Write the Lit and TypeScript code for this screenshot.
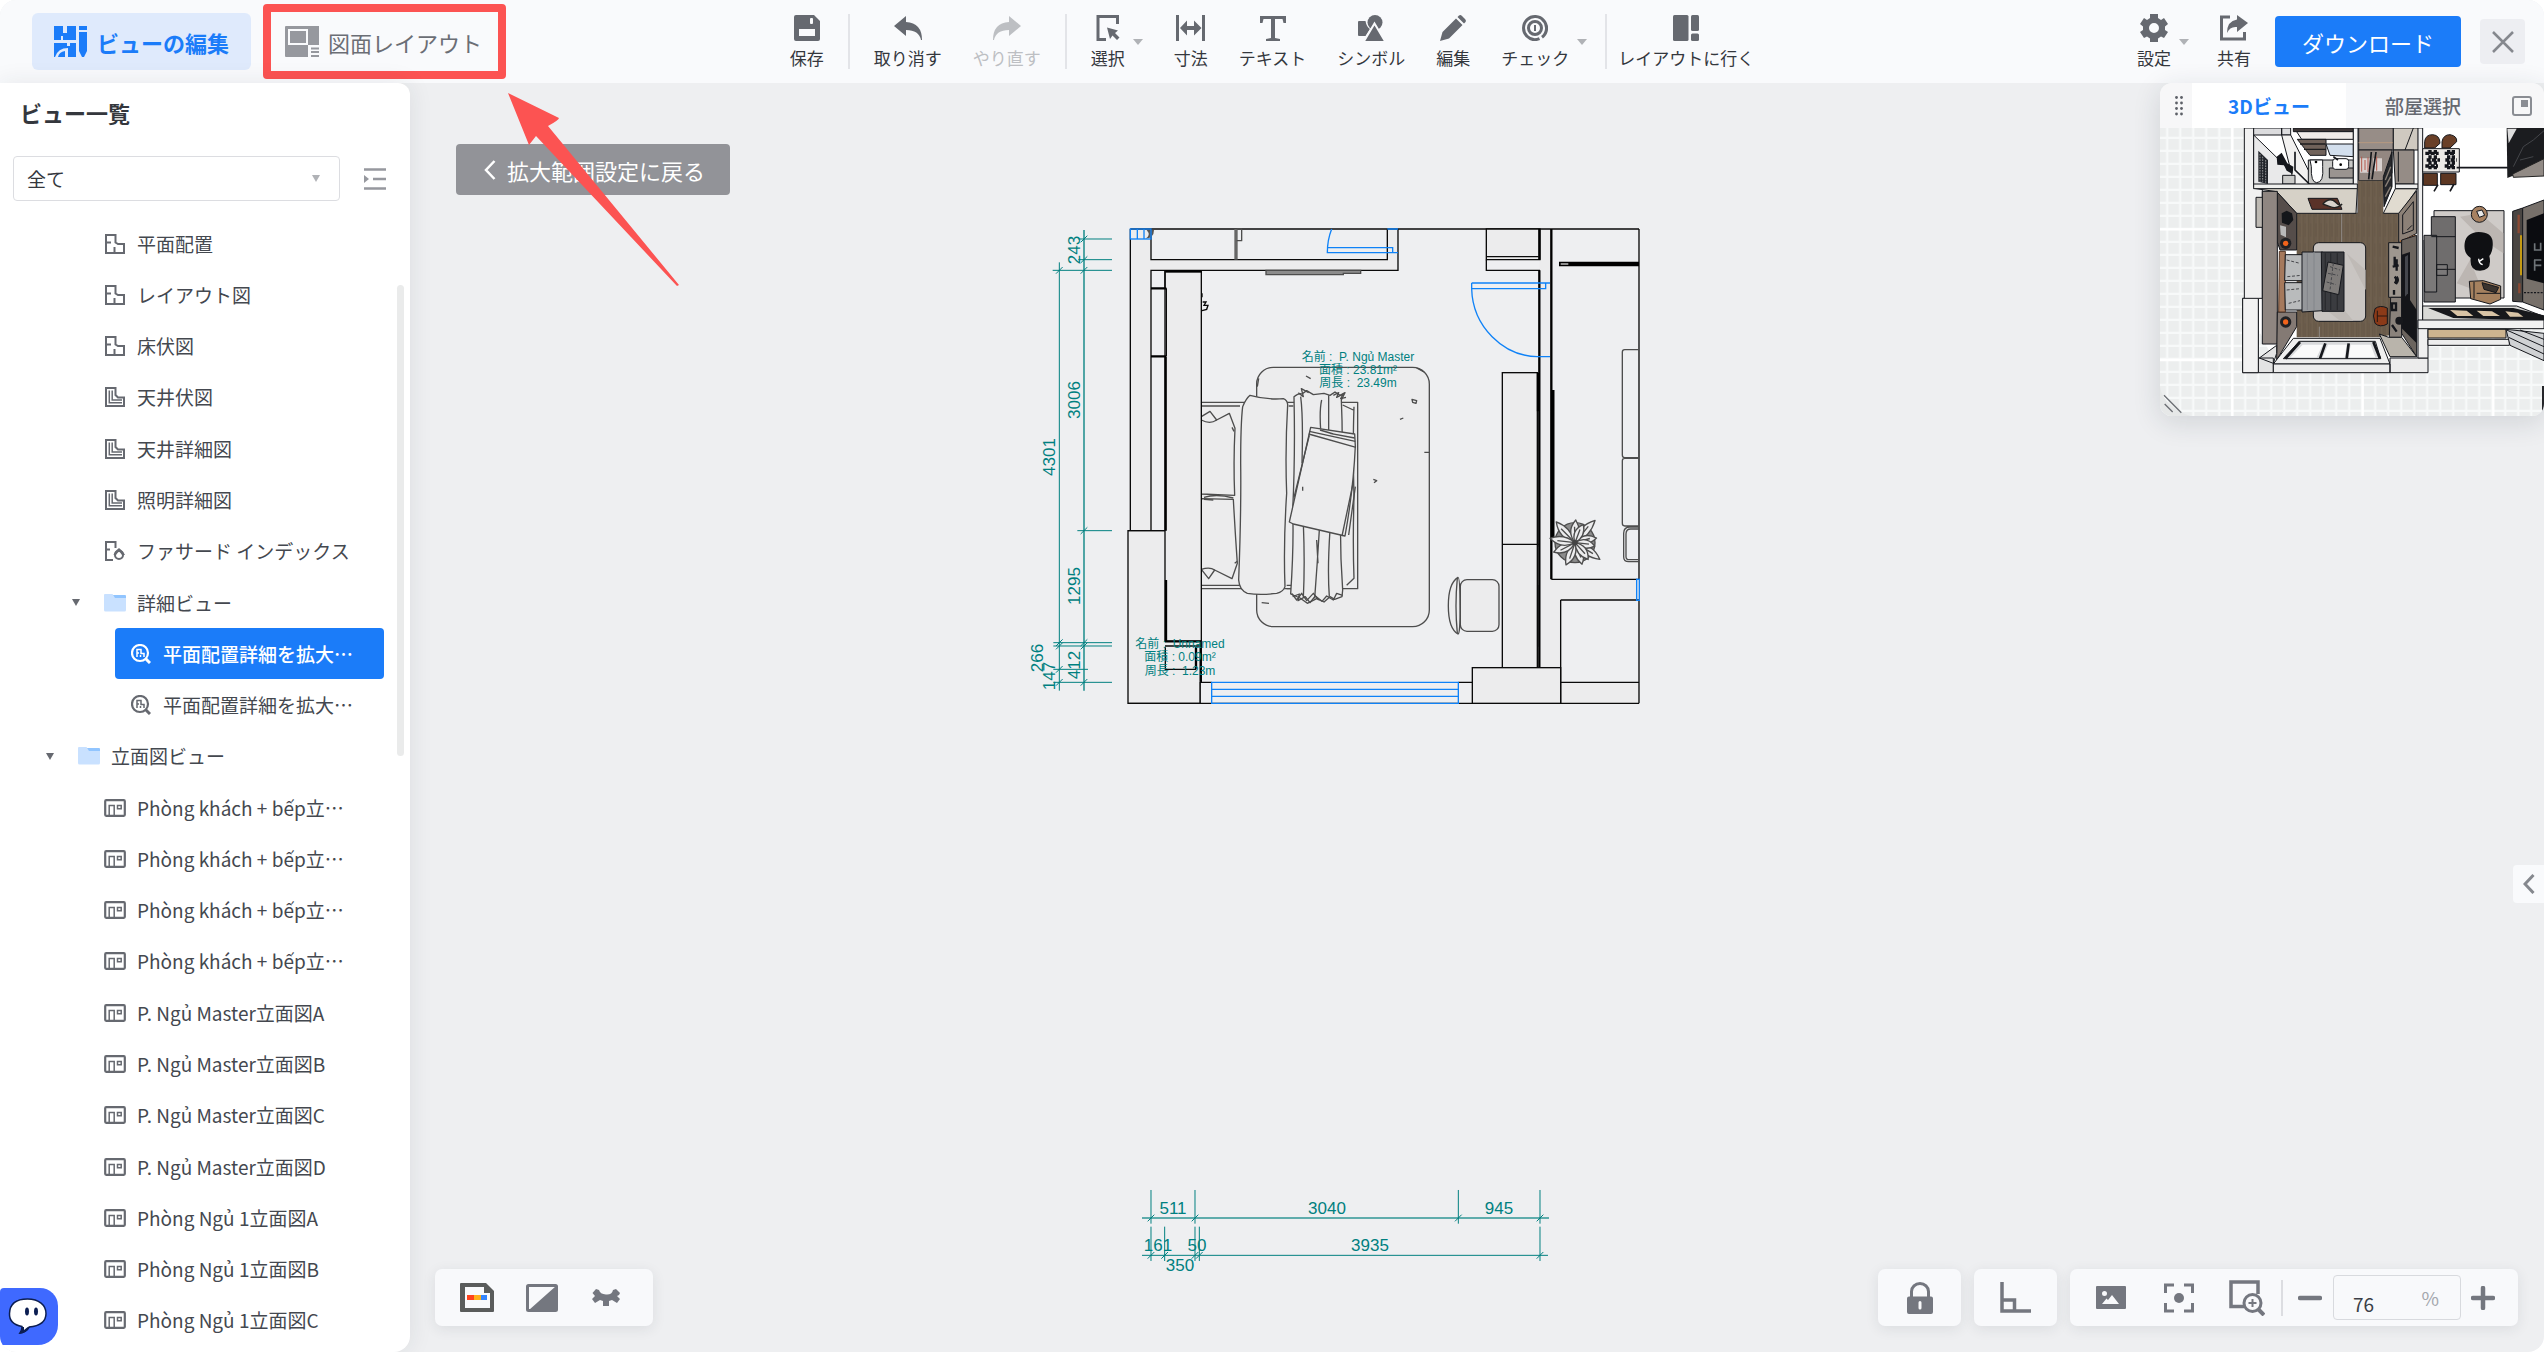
import { LitElement, html, svg, css, TemplateResult } from "lit";
import { customElement, state } from "lit/decorators.js";
import { classMap } from "lit/directives/class-map.js";

type Icon = TemplateResult;

const icons: Record<string, Icon> = {
  save: html`<svg width="26" height="26" viewBox="0 0 26 26"><path fill="currentColor" fill-rule="evenodd" d="M2 0H20L26 6V24Q26 26 24 26H2Q0 26 0 24V2Q0 0 2 0ZM17 3Q16 3 16 4V8Q16 9 17 9H18Q19 9 19 8V4Q19 3 18 3ZM5 14V21H21V14Z"/></svg>`,
  undo: html`<svg width="28" height="26" viewBox="0 0 28 26"><path fill="currentColor" d="M12 1V7Q28 8 28 25H27Q25 15 12 15V21L0 11Z"/></svg>`,
  redo: html`<svg width="28" height="26" viewBox="0 0 28 26"><path fill="currentColor" d="M16 1V7Q0 8 0 25H1Q3 15 16 15V21L28 11Z"/></svg>`,
  select: html`<svg width="24" height="26" viewBox="0 0 24 26"><path fill="none" stroke="currentColor" stroke-width="3" d="M10 24.500H2V1.500H21.500V9"/><path fill="currentColor" d="M11 12.500L22 15.500L19 18L23.500 22.500L21 25L16.500 20.500L14 24Z"/></svg>`,
  measure: html`<svg width="30" height="26" viewBox="0 0 30 26"><path fill="currentColor" d="M0 0H3V26H0ZM26 0H29V26H26ZM4 13L11 5.500V11H18V5.500L25.500 13L18 20.500V15H11V20.500Z"/></svg>`,
  text: html`<svg width="26" height="26" viewBox="0 0 26 26"><path fill="currentColor" d="M0 1H26V8H23.500L22.500 4H15V23L20 24V26H6V24L11 23V4H3.500L2.500 8H0Z"/></svg>`,
  symbol: html`<svg width="26" height="26" viewBox="0 0 26 26"><circle cx="17" cy="7.500" r="7.500" fill="currentColor"/><path fill="currentColor" d="M1 6H7.500Q8.500 12 12 14L7.500 21H1Q0 21 0 20V7Q0 6 1 6Z"/><path fill="currentColor" stroke="#f9fafc" stroke-width="2" d="M16.500 8.500L27.500 27H5.500Z"/></svg>`,
  pencil: html`<svg width="26" height="26" viewBox="0 0 26 26"><path fill="currentColor" d="M16 3.500L22.500 10L9 23.500L0 26L2.500 17ZM17.500 2L19 .5Q20.500 -.5 22 1L25 4Q26.500 5.500 25.500 7L24 8.500Z"/></svg>`,
  check: html`<svg width="26" height="26" viewBox="0 0 26 26" fill="none" stroke="currentColor"><path stroke-width="3" d="M20 22.200A11.500 11.500 0 1 0 5 21.300A11.500 11.500 0 0 0 17.500 23.600M20 4A11.500 11.500 0 0 1 23.300 18.500"/><circle cx="13" cy="13" r="6.500" stroke-width="3"/><path stroke-width="2" d="M13 10V16"/></svg>`,
  goLayout: html`<svg width="26" height="26" viewBox="0 0 26 26" fill="currentColor"><rect width="15.500" height="26" rx="1.500"/><rect x="18" width="8" height="16" rx="1.500"/><rect x="18" y="18.500" width="8" height="7.500" rx="1.500"/></svg>`,
  gear: html`<svg width="28" height="28" viewBox="0 0 28 28"><path fill="currentColor" fill-rule="evenodd" d="M10 0H18V4L21 6L24 4L28 10L25 12.500V16L28 18L24 24L21 22.500L18 24.500V28H10V24.500L7 22.500L4 24L0 18L3 16V12.500L0 10L4 4L7 6L10 4ZM14 9A5 5 0 1 0 14 19A5 5 0 1 0 14 9Z"/></svg>`,
  share: html`<svg width="28" height="26" viewBox="0 0 28 26"><path fill="none" stroke="currentColor" stroke-width="3" d="M10 2H1.500V24H24.500V17"/><path fill="currentColor" d="M17 0L28 8L17 17V12Q10 11 7 18Q7 6 17 4.500Z"/></svg>`,
  plan: html`<svg width="20" height="20" viewBox="0 0 20 20" fill="none" stroke="currentColor" stroke-width="2"><path d="M1 1H10.500V8.500L13 10H19V19H1ZM1 8.500H6M9.500 19V13"/></svg>`,
  ceiling: html`<svg width="20" height="20" viewBox="0 0 20 20" fill="none" stroke="currentColor" stroke-width="2"><path d="M1 1H10.500V8L13 10.500H19V19H1Z"/><path stroke-width="1.500" d="M4.300 3.500V15.800H17M7.200 3.500V13H17"/></svg>`,
  facade: html`<svg width="20" height="20" viewBox="0 0 20 20" fill="none" stroke="currentColor" stroke-width="2"><path d="M8 19H1V1H10.500V7M1 8.500H5"/><circle cx="14" cy="14" r="4"/><path fill="currentColor" stroke="none" d="M10 10.500L14 7L18 10.500L20 14H17L14 10L11 14H8.500Z"/></svg>`,
  detail: html`<svg width="20" height="20" viewBox="0 0 20 20" fill="none" stroke="currentColor"><circle cx="9" cy="9" r="8" stroke-width="2.200"/><path stroke-width="3" d="M14.500 14.500L19 19"/><path stroke-width="1.500" d="M6 13V5.500H10V9.500H13V13M6 9H8M9.500 13V11"/></svg>`,
  elevation: html`<svg width="22" height="18" viewBox="0 0 22 18" fill="none" stroke="currentColor"><rect x="1.200" y="1.200" width="19.600" height="15.600" rx="1" stroke-width="2.200"/><path stroke-width="1.500" d="M5.200 17V6.500H10.200V17M13.500 6.500H17.200V9.800H13.500Z"/></svg>`,
  folder: html`<svg width="22" height="18" viewBox="0 0 22 18"><path fill="#91c5ff" d="M9 1H21Q22 1 22 2V8H9Z"/><path fill="#c9e1ff" d="M1 0H8.500L11 4H22V16Q22 17.500 20.500 17.500H1.500Q0 17.500 0 16V1Q0 0 1 0Z"/></svg>`,
};

interface TreeRow {
  label: string;
  icon: string;
  level: number;
  open?: boolean;
}

const elevations = [
  "Phòng khách + bếp立…", "Phòng khách + bếp立…", "Phòng khách + bếp立…", "Phòng khách + bếp立…",
  "P. Ngủ Master立面図A", "P. Ngủ Master立面図B", "P. Ngủ Master立面図C", "P. Ngủ Master立面図D",
  "Phòng Ngủ 1立面図A", "Phòng Ngủ 1立面図B", "Phòng Ngủ 1立面図C",
];

const rows: TreeRow[] = [
  { label: "平面配置", icon: "plan", level: 2 },
  { label: "レイアウト図", icon: "plan", level: 2 },
  { label: "床伏図", icon: "plan", level: 2 },
  { label: "天井伏図", icon: "ceiling", level: 2 },
  { label: "天井詳細図", icon: "ceiling", level: 2 },
  { label: "照明詳細図", icon: "ceiling", level: 2 },
  { label: "ファサード インデックス", icon: "facade", level: 2 },
  { label: "詳細ビュー", icon: "folder", level: 2, open: true },
  { label: "平面配置詳細を拡大…", icon: "detail", level: 3 },
  { label: "平面配置詳細を拡大…", icon: "detail", level: 3 },
  { label: "立面図ビュー", icon: "folder", level: 1, open: true },
  ...elevations.map((label) => ({ label, icon: "elevation", level: 2 })),
];

const shared = css`
  * { box-sizing: border-box; }
  button, input, select { font: inherit; color: inherit; border: 0; background: none; padding: 0; margin: 0; cursor: pointer; }
  svg { display: block; flex: none; }
`;

const caret = html`<svg class="caret" width="10" height="6" viewBox="0 0 10 6"><path fill="#b0b2b6" d="M0 0H10L5 6Z"/></svg>`;

@customElement("floor-plan")
export class FloorPlan extends LitElement {
  static styles = css`
    :host { display: block; }
    .sheet { display: block; width: 100%; height: 100%; }
    .dim { font: 17px "Liberation Sans", sans-serif; fill: #008080; text-anchor: middle; }
    .note { font: 12px "Liberation Sans", "Noto Sans CJK JP", sans-serif; fill: #008080; text-anchor: middle; white-space: pre; }
    .teal { stroke: #008080; fill: none; }
    .wall { stroke: #0a0a0a; stroke-width: 4; fill: #ececed; }
    .line { stroke: #0a0a0a; stroke-width: 4; fill: none; }
    .thick { stroke: #000; stroke-width: 7; fill: none; }
    .blue { stroke: #0f82f7; stroke-width: 4; fill: none; }
    .item { stroke: #4d4d4d; stroke-width: 4; fill: #ececed; stroke-linejoin: round; }
    .sketch { stroke: #4d4d4d; stroke-width: 4; fill: none; stroke-linejoin: round; }
    .shade { stroke: #4d4d4d; stroke-width: 4; fill: #8c8c8c; }
  `;

  private vdim(x: number, y: number, label: string) {
    return svg`<text class="dim" transform="translate(${x} ${y}) rotate(-90)">${label}</text>`;
  }

  private tick(x: number, y: number) {
    return svg`<path d="M${x - 10} ${y + 10}L${x + 10} ${y - 10}"/>`;
  }

  private leaf(angle: number, length: number) {
    return svg`<g transform="translate(1665 998) rotate(${angle})"><path class="item" d="M0 0Q${length / 2} -28 ${length} 0Q${length / 2} 22 0 0L${length * 0.7} -3"/></g>`;
  }

  render() {
    const marks: [number, number][] = [
      [192, 87], [192, 149], [192, 181], [192, 962], [192, 1298], [192, 1308], [192, 1417],
      [118, 181], [118, 1298], [118, 1308], [118, 1378], [118, 1417],
    ];
    const upper = [93, 225, 1015, 1260];
    const lower = [93, 134, 225, 238, 1260];
    const leaves: [number, number][] = [
      [-132, 84], [-88, 68], [-48, 90], [-12, 66], [34, 90], [72, 68], [112, 72], [156, 70], [190, 76], [-65, 60], [10, 60], [52, 64],
    ];
    return html`
      <svg class="sheet" viewBox="410 83 2134 1269" preserveAspectRatio="xMidYMid meet" role="img" aria-label="平面図">
        <g transform="translate(1020 210) scale(.33333)">
          <path fill="#ececed" d="M331 57H393V149H1102V57H1134V181H393V962H331ZM1558 57H1594V1108H1857V1170H1622V1417H1857V1480H1357V1373H1558Z"/>
          <path class="line" d="M331 57H1857M331 57V962M393 57V149H1102V57M1134 57V181H393V962M1857 57V1108M1857 1170V1480M1594 1108H1857M1622 1170H1857M1622 1170V1480M1622 1417H1857M544 1417H575M540 1417V1480M1315 1417H1357"/>
          <rect class="item" x="710" y="472" width="518" height="778" rx="50"/>
          <path class="sketch" d="M858 498L872 506M1176 568L1190 572L1188 580L1178 577ZM1140 628L1150 624M1060 808L1070 812L1062 818M725 1178L747 1180M1213 727H1227M712 530L716 505M1190 474L1212 486"/>

          <rect class="item" x="544" y="577" width="469" height="559"/>
          <path class="sketch" d="M544 588H660M544 1126H660M1002 590Q998 700 1002 860Q998 1000 1002 1105L980 1126M968 585L1000 600"/>
          <path class="item" d="M544 620L570 604L590 630L628 610L645 655Q640 760 644 856L544 852Z"/>
          <path class="item" d="M544 866L640 868Q645 960 652 1060L636 1106L584 1080L566 1106L544 1078Z"/>
          <path class="sketch" d="M544 630Q570 644 590 630M544 1078Q570 1070 584 1080M552 862Q590 850 640 864M636 652L642 664M644 1060L652 1054M552 868L580 870"/>
          <path class="item" d="M690 556Q740 570 790 566Q802 570 803 584Q795 720 800 850Q790 1000 795 1130Q790 1146 770 1150Q720 1156 682 1150Q658 1140 656 1110Q664 900 662 760Q662 640 668 590Q678 566 690 556Z"/>
          <path class="sketch" d="M806 588H820M800 1126H816M800 1136H816"/>
          <path class="item" d="M822 560Q838 548 846 552L860 542L880 554L912 550L930 556L945 546L960 556L975 548L964 570Q970 700 963 860Q958 1000 968 1140L966 1160L944 1168L930 1160L912 1176L890 1166L862 1180L840 1164L812 1152Q822 1000 818 900Q826 740 822 560Z"/>
          <path class="sketch" d="M842 560Q850 620 846 760M905 570Q898 600 902 660M926 556V660M850 940Q855 1060 850 1165M898 960Q892 1060 884 1165M930 960Q922 1080 928 1160M890 990L894 1060M835 548L850 560L844 536L866 548M818 1160L838 1152L834 1172L856 1160L870 1178L886 1158L906 1174L920 1158L940 1170L950 1150L968 1156"/>
          <path class="sketch" d="M940 556L956 548L950 562L970 552L962 566L978 562M815 1150L830 1170L845 1150L860 1172L880 1150L896 1170"/>
          <path class="item" d="M872 652L1004 672L1006 708Q1000 840 975 978L820 942L808 936Z"/>
          <path class="sketch" d="M866 672L1008 712M868 664L1006 694M900 660L940 672M930 670L1004 684M1006 830L986 975M868 676L822 862M848 830V842M966 978L1000 816"/>

          <path class="shade" d="M738 181H1022V190H970V194H738Z"/>
          <path d="M648 57V149" stroke="#666" stroke-width="10"/>
          <path class="sketch" d="M650 57H665V92H650"/>
          <path fill="#555" d="M380 60H402Q402 84 376 86Q394 76 380 60Z"/>
          <path class="line" d="M546 250V262M548 276H558L552 286H564L560 298L546 302"/>

          <path class="wall" d="M324 962H437V1294H544V1417H540V1480H324Z"/>
          <rect class="wall" x="435" y="185" width="109" height="1109"/>
          <path class="thick" d="M435 184H544M437 440V962M393 235H439M393 439H439M435 1294H546M438 1110V1294"/>
          <path class="line" d="M435 181V235M439 235V439M435 1308H540M543 1294V1417M324 962H435M436 1312V1378H527V1312M393 1480H1857M324 1480H575"/>
          <path class="thick" d="M542 1300V1415M528 1312V1376"/>

          <path class="wall" d="M1399 57H1560V149H1399Z"/>
          <path class="line" d="M1399 140H1556M1399 149V181H1560"/>
          <rect class="wall" x="1447" y="488" width="105" height="885"/>
          <path class="line" d="M1447 1003H1556M1553 600V1010M1553 1125V1310"/>
          <path class="thick" d="M1558 57V149M1558 181V1373M1594 57V1108M1554 488V604M1600 540V990"/>
          <rect class="wall" x="1357" y="1373" width="265" height="107"/>
          <path d="M1617 162H1857" stroke="#000" stroke-width="13"/>
          <path d="M1622 162H1645" stroke="#aaa" stroke-width="5"/>

          <rect class="blue" x="331" y="57" width="62" height="30"/>
          <path class="blue" d="M352 57V87M372 57V87M935 57Q922 90 922 128H1134M922 113H1118V128M1102 57H1134"/>
          <path class="blue" d="M1355 219H1590M1355 219V236H1577V219M1355 236C1358 350 1450 438 1552 440H1590"/>
          <path class="blue" d="M575 1417H1315V1480H575ZM575 1438H1315M575 1459H1315"/>
          <rect class="blue" x="1850" y="1108" width="8" height="63"/>

          <path class="sketch" d="M1857 419H1814Q1807 419 1807 426V735Q1807 743 1814 743H1857M1857 745H1814Q1807 745 1807 752V940Q1807 948 1814 948H1857M1857 951H1830Q1811 951 1811 970V1040Q1811 1055 1826 1055H1857M1857 957H1832Q1818 957 1818 972V1040Q1818 1049 1828 1049H1857"/>
          <rect class="item" x="1321" y="1109" width="116" height="155" rx="20"/>
          <path class="item" d="M1314 1102Q1285 1120 1285 1187Q1285 1255 1314 1272Q1321 1272 1320 1187Q1320 1102 1314 1102Z"/>
          <path class="sketch" d="M1312 1104Q1304 1187 1312 1270"/>
          <circle class="shade" cx="1665" cy="998" r="60"/>
          ${leaves.map(([a, l]) => this.leaf(a, l))}
          <circle cx="1665" cy="998" r="8" fill="#444"/>

          <g class="teal" stroke-width="3">
            <path d="M118 157V1442M98 181H276M175 87H276M175 149H276M172 962H276M100 1298H276M100 1308H276M100 1378H204M100 1417H276"/>
            <path d="M192 60V1442" stroke-width="5" opacity=".8"/>
            ${marks.map(([x, y]) => this.tick(x, y))}
          </g>
        </g>
        <g class="teal" stroke-width="3" transform="translate(1120 1170) scale(.33333)">
          <path d="M66 144H1287" stroke-width="5" opacity=".8"/>
          <path d="M66 256H1284"/>
          ${upper.map((x) => svg`<path d="M${x} 60V161"/>${this.tick(x, 144)}`)}
          ${lower.map((x) => svg`<path d="M${x} 170V273"/>${this.tick(x, 256)}`)}
        </g>
        ${this.vdim(1080, 250, "243")}${this.vdim(1080, 400, "3006")}${this.vdim(1080, 586, "1295")}
        ${this.vdim(1080, 665, "412")}${this.vdim(1055, 457, "4301")}${this.vdim(1043, 658, "266")}${this.vdim(1055, 676, "147")}
        <text class="dim" x="1173" y="1214">511</text>
        <text class="dim" x="1327" y="1214">3040</text>
        <text class="dim" x="1499" y="1214">945</text>
        <text class="dim" x="1158" y="1251">161</text>
        <text class="dim" x="1197" y="1251">50</text>
        <text class="dim" x="1370" y="1251">3935</text>
        <text class="dim" x="1180" y="1271">350</text>
        <text class="note" x="1358" y="361">名前 :  P. Ngủ Master</text>
        <text class="note" x="1358" y="374">面積 : 23.81m²</text>
        <text class="note" x="1358" y="387">周長 :  23.49m</text>
        <text class="note" x="1180" y="648">名前 :  Unnamed</text>
        <text class="note" x="1180" y="661">面積 : 0.09m²</text>
        <text class="note" x="1180" y="675">周長 :  1.23m</text>
      </svg>`;
  }
}

@customElement("room-preview")
export class RoomPreview extends LitElement {
  static styles = css`
    :host { display: block; }
    .scene { display: block; width: 100%; height: auto; }
    .e { stroke: #15171c; stroke-width: 3; stroke-linejoin: round; }
  `;

  render() {
    return html`
      <svg class="scene" viewBox="180 384 1152 864" role="img" aria-label="3Dビュー">
        <defs>
          <pattern id="tiles" x="202" y="375" width="39" height="39" patternUnits="userSpaceOnUse">
            <rect width="39" height="39" fill="#f7f9f9"/><rect x="3" y="3" width="32" height="32" fill="#eceeee"/>
          </pattern>
          <pattern id="wood" width="16" height="60" patternUnits="userSpaceOnUse">
            <rect width="16" height="60" fill="#6c5d4d"/><path d="M2 0V60M8 10V50" stroke="#625444" stroke-width="2"/><path d="M13 0V60" stroke="#746551" stroke-width="2"/>
          </pattern>
        </defs>
        <rect x="180" y="384" width="1152" height="864" fill="url(#tiles)"/>
        <path d="M397 384V1248M788 1118V1248M1180 1000V1248M180 688H433M180 1080H433" stroke="#fff" stroke-width="7"/>
        <path fill="#fff" d="M433 384H1332V960H960V1080H520L433 900Z"/>
        <path class="e" fill="#f1f1f1" d="M433 384H461V560H487V895H475V1118H428V895H433Z"/>
        <path class="e" fill="#e9e9ea" d="M461 405L620 560H461Z"/>
        <path class="e" fill="#dcdcde" d="M461 384H545V405H461ZM545 384H572V405H545Z"/>
        <path class="e" fill="#f2f1f0" d="M545 405H572L650 560H585Z"/>
        <path class="e" fill="#c9c9c7" d="M548 526H585V552H548ZM625 480H760V552H625Z"/>
        <path fill="#22252b" d="M475 452L504 480V552L475 545Z"/>
        <path d="M480 462V545M488 470V545M497 480V548" stroke="#c9c9c9" stroke-width="2" stroke-dasharray="5 3"/>
        <path fill="#14161b" d="M530 470L545 458L562 490L580 500L578 522L560 512L552 496L532 494Z"/>
        <path class="e" fill="#3d3636" d="M580 384H760V395H580Z"/>
        <path class="e" fill="#f0ece9" d="M590 395H760V418H605Z"/>
        <path class="e" fill="#70625a" d="M592 418H678V466H630Z"/>
        <path d="M600 432H676M612 448H678" stroke="#1c1c1e" stroke-width="4"/>
        <path class="e" fill="#d3dfed" d="M678 432H760V470L690 466Z"/>
        <path class="e" fill="#9a9490" d="M688 504H760V534H688Z"/>
        <rect class="e" x="698" y="476" width="48" height="32" rx="8" fill="#fff"/>
        <path class="e" fill="#fff" d="M630 480H668V500Q672 548 650 548Q632 548 634 500Z"/>
        <circle cx="648" cy="486" r="4"/><circle cx="722" cy="494" r="4"/>
        <path d="M585 455V510L628 552M700 470L714 480" stroke="#15171c" stroke-width="5" fill="none"/>
        <path class="e" fill="#f4f4f4" d="M760 384H774V640H760Z"/>
        <path class="e" fill="#978d87" d="M776 384H880V450H776Z"/>
        <path d="M776 428H880" stroke="#b69a80" stroke-width="3"/>
        <path class="e" fill="#938781" d="M776 450H876V520L846 542H776Z"/>
        <path fill="#d8d0ce" d="M780 475H812V518H780ZM820 475H846V514H820Z"/>
        <path d="M785 470V515M795 480V510M804 472V516M830 470V512" stroke="#b4594c" stroke-width="3"/>
        <path d="M814 456L806 538M828 456L816 538" stroke="#15171c" stroke-width="5"/>
        <path class="e" fill="#cfc9c0" d="M880 384H955V450H880Z"/><path class="e" fill="none" d="M940 384L915 450"/>
        <path class="e" fill="#958c86" d="M880 450H942V552H886Z"/><path class="e" d="M895 455V545"/>

        <path fill="url(#wood)" d="M774 542H850V640H896V1000L840 1012H590V640H774Z"/>
        <path d="M725 642V726M658 980V1012" stroke="#8f8a85" stroke-width="3"/>
        <path class="e" fill="#d6d1c7" d="M461 565H772L768 640H590L530 575Z"/>
        <path class="e" fill="#f0f0ee" d="M461 552H772V566H461Z"/>
        <path class="e" fill="#5a3228" d="M624 595H712L726 628H636Z"/>
        <path d="M668 612Q690 590 706 606T726 612Q712 628 690 620T668 612" fill="#d8d2cc" stroke="#222" stroke-width="4"/>
        <path class="e" fill="#26272b" d="M850 530L876 455V560L852 620Z"/>
        <path d="M856 540L872 500M856 560L872 530M856 590L872 560" stroke="#8a8077" stroke-width="4"/>
        <path class="e" fill="#e0dbd0" d="M886 566H952L900 640H850Z"/>
        <path class="e" fill="#eee" d="M886 552H955V566H886Z"/>
        <path class="e" fill="#8c8177" d="M896 640L950 572V700L896 728Z"/>
        <path class="e" fill="none" d="M908 645L940 605V690L908 702ZM922 690L936 676"/>
        <path d="M900 724L946 706" stroke="#b4672e" stroke-width="4"/>

        <rect class="e" x="468" y="592" width="20" height="90" fill="#bdb9b3"/>
        <path class="e" fill="#554d4a" d="M530 575L590 640V750H540L530 720Z"/>
        <path class="e" fill="#8f8681" d="M487 574H532V1032H487Z"/>
        <path class="e" fill="#847a74" d="M532 936H590V980L530 1080Z"/>
        <path fill="#14161a" d="M545 640L560 632L576 640L580 660L566 676L546 668Z"/>
        <path fill="#b9b9b9" d="M540 676L558 680V712L542 704Z"/>
        <circle cx="557" cy="730" r="17" fill="#202124"/><circle cx="557" cy="730" r="8" fill="#f0631b"/>
        <circle cx="557" cy="966" r="17" fill="#202124"/><circle cx="557" cy="966" r="8" fill="#f0631b"/>
        <rect class="e" x="640" y="728" width="157" height="236" rx="16" fill="#c9c5c2"/>
        <path d="M640 900L720 962H760L690 880ZM740 760L797 810V870Z" fill="#bfbab6"/>
        <path fill="#a5795c" stroke="#503525" stroke-width="3" d="M538 754H556V936H536Z"/>
        <path class="e" fill="#b9bbbc" d="M556 764H612V842H554ZM554 848H612V930H556Z"/>
        <path class="e" fill="#95979a" d="M606 756H668V932L606 936Z"/>
        <path d="M622 760V930M642 756V930" stroke="#82858a" stroke-width="3"/>
        <path class="e" fill="#3b3c40" d="M664 756H732V934H666Z"/>
        <path d="M676 760V930M692 760V930M712 760V930" stroke="#2a2b2f" stroke-width="4"/>
        <path class="e" fill="#7d7a78" d="M684 786L730 796L716 884L668 872Z"/>
        <path d="M690 800L720 810M684 820L714 826M680 846L708 854M700 790L690 870M560 780L600 790M562 830L604 826M560 870L600 866M566 910L600 902" stroke="#46474b" stroke-width="3" stroke-dasharray="9 5"/>

        <path class="e" fill="#9e978f" d="M866 728H905V892H866Z"/>
        <path class="e" fill="#8a827b" d="M872 892H905V1012H868Z"/>
        <path class="e" fill="#6b645e" d="M905 720L950 706V1070L905 1000Z"/>
        <path fill="#141519" d="M905 764L930 756V900L950 930V1030L905 985Z"/>
        <path d="M915 770L924 765V880L915 890Z" fill="#44464c"/>
        <path d="M878 740L896 744M884 770V800M890 778V812M878 800L896 796M884 830Q894 840 884 850M890 830Q898 842 888 852M882 870V884M876 910H888V930H876ZM876 975L890 995" stroke="#15171c" stroke-width="7" fill="none"/>
        <circle cx="898" cy="962" r="12" fill="#17181c"/>
        <path class="e" fill="#8b3a18" d="M825 926Q840 914 862 924V972Q840 984 825 970Q816 948 825 926Z"/>
        <path d="M832 932V966M832 948H862" stroke="#2a1710" stroke-width="3"/>

        <path class="e" fill="#efefef" d="M580 1015L840 1015L870 1092H520Z"/>
        <path class="e" fill="#d9dadc" d="M598 1024H826L842 1076H550Z"/>
        <path fill="#fafafa" d="M608 1034H668L650 1072H572ZM684 1034H740L734 1072H668ZM752 1034H812L826 1072H746Z"/>
        <path d="M600 1026L556 1076M676 1030L660 1076M746 1030L740 1076M820 1026L840 1076" stroke="#15171c" stroke-width="8"/>
        <path class="e" fill="#b9b4ab" d="M838 1002L866 1012H905L950 1070H870Z"/>
        <path class="e" fill="#e3e3e3" d="M475 1074H520V1118H475ZM478 1074L530 1036V1060L520 1090Z"/>
        <path class="e" fill="#ececec" d="M520 1092H870V1118H520ZM870 1074H984V1118H870Z"/>
        <path class="e" fill="#f2f2f2" d="M428 895H475V1118H428Z"/>
        <path class="e" fill="#efefef" d="M954 384H968V960H984V1074H954Z"/>

        <path class="e" fill="#6a4028" d="M974 425Q976 404 998 404Q1020 406 1020 430L1004 444H974ZM1026 425Q1030 404 1050 404Q1072 408 1070 425L1050 444H1026Z"/>
        <path class="e" fill="#5d3722" d="M970 520H1012V556H970ZM1022 520H1068V554H1022Z"/>
        <path class="e" fill="#eceae7" d="M968 446H1078V516H968Z"/>
        <path d="M976 460H1016M980 480H1020M976 498H1014M1034 460H1066M1036 480H1070M1034 498H1064M990 450V508M1006 450V508M1046 450V508M1060 450V508" stroke="#14161c" stroke-width="10" stroke-dasharray="12 4"/>
        <path d="M1070 503H1332M1014 554L1002 574M1062 552L1050 574" stroke="#15171c" stroke-width="5"/>
        <path fill="#1b1c1f" d="M1220 384H1332V490L1222 534Z"/>
        <path fill="#ddd" d="M1222 386H1250L1226 430Z"/>
        <path d="M1240 500L1270 440L1300 420L1332 392M1260 480L1300 470" stroke="#44464a" stroke-width="3" fill="none"/>
        <path fill="#918a85" stroke="#222" stroke-width="3" d="M1238 522L1332 476V528L1240 532Z"/>

        <path class="e" fill="#cfcbc8" d="M1002 632H1212V894H1002Z"/>
        <path d="M1080 650L1140 640L1210 700V760L1150 720ZM1070 850L1110 780L1150 880Z" fill="#bcb6b2"/>
        <path class="e" fill="#6f6d6d" d="M994 650H1066V906H972V720L994 706Z"/>
        <path class="e" fill="#7b7979" d="M972 706H1010V876H974ZM1010 794H1042V826H1010Z"/>
        <path class="e" fill="none" d="M994 710H1066M1010 808H1066"/>
        <circle class="e" cx="1138" cy="643" r="24" fill="#a78161"/><path class="e" fill="#e9e9e9" d="M1130 634L1146 630L1154 646L1138 652Z"/>
        <path fill="#0f1013" d="M1094 730Q1098 698 1136 696Q1176 696 1178 726Q1180 752 1168 768Q1178 812 1140 812Q1108 812 1112 774Q1090 760 1094 730Z"/>
        <path d="M1136 776Q1136 790 1148 794M1138 784L1150 776" stroke="#fff" stroke-width="4" fill="none"/>
        <path class="e" fill="#a5815f" d="M1108 844L1150 842L1202 858V898L1170 912L1112 896Z"/>
        <path class="e" fill="#3a332e" d="M1146 848L1196 862L1188 878L1152 868Z"/>
        <path class="e" fill="none" d="M1122 846V896M1130 880H1200"/>
        <path class="e" fill="#4a4643" d="M1238 634L1268 624V906L1238 904Z"/>
        <path class="e" fill="#77706a" d="M1268 624L1332 600V930L1268 906Z"/>
        <path fill="#0b0c10" d="M1280 660L1332 640V850L1280 836Z"/>
        <path d="M1304 730V750H1322V728M1302 780H1324M1302 796H1324M1304 780V812" stroke="#6f7478" stroke-width="5" fill="none"/>
        <path d="M1263 706V826" stroke="#c59a13" stroke-width="6"/><path d="M1256 644V700M1258 850V880" stroke="#8c4a34" stroke-width="7"/>
        <path d="M1272 878H1332" stroke="#15171c" stroke-width="4" stroke-dasharray="6 4"/>

        <path class="e" fill="#d9d9d6" d="M968 918H1250L1332 950V962H968Z"/>
        <path fill="#17181b" d="M984 924H1240L1332 946V962L1060 954Z"/>
        <path fill="#d9c4a5" d="M1050 930L1100 932L1120 948H1072ZM1130 932L1176 934L1200 948H1150ZM1216 934L1254 938L1270 950H1230Z"/>
        <path class="e" fill="#f1f1f1" d="M954 960H1332V986H954Z"/>
        <path class="e" fill="#cdb48f" d="M984 988H1218V1014H984Z"/>
        <path class="e" fill="#ededed" d="M984 1018H1228V1036H984Z"/>
        <path class="e" fill="#d0d2d4" d="M1218 988L1332 1000V1082L1230 1036Z"/>
        <path class="e" fill="none" d="M1220 990L1332 1040M1226 1012L1332 1062M1260 990L1332 1018"/>
        <path fill="#25262a" d="M1326 1158H1332V1248H1326Z"/>
        <path fill="#e6e8e8" d="M180 1160Q190 1220 272 1248H200Q180 1248 180 1230Z"/>
        <path d="M192 1186L244 1238M194 1212L218 1236" stroke="#6c6f74" stroke-width="4"/>
      </svg>`;
  }
}

@customElement("app-root")
export class AppRoot extends LitElement {
  @state() private current = 8;
  @state() private zoom = 76;

  static styles = [shared, css`
    :host {
      display: block;
      background: #fff;
      color: #3b3f47;
      font-family: "Noto Sans CJK JP", sans-serif;
      font-size: 19px;
      line-height: 28px;
    }
    .app { display: flex; flex-direction: column; height: 100vh; border-radius: 16px; overflow: hidden; background: #eeeff1; }
    .header { display: grid; grid-template-columns: 1fr auto 1fr; flex: none; height: 83px; background: #f9fafc; }
    .modes { display: flex; align-items: center; padding-left: 32px; gap: 12px; }
    .mode { display: flex; align-items: center; gap: 10px; height: 57px; padding: 0 22px; border-radius: 6px; font-size: 22px; color: #6b6e75; white-space: nowrap; }
    .mode.active { background: #dfeafc; color: #1b7cf9; font-weight: 700; }
    .mode.marked { gap: 9px; height: 75px; padding: 0 16px 0 14px; border: 8px solid #fc5352; border-radius: 4px; }
    .tools { display: flex; align-items: center; }
    .group { display: flex; align-items: center; gap: 31px; padding: 0 24px; height: 55px; }
    .group + .group { border-left: 2px solid #e3e4e8; }
    .group.last { padding-left: 11px; padding-right: 24px; }
    .group.wide { padding-right: 18px; }
    .tool { display: flex; flex-direction: column; align-items: center; gap: 5px; padding-top: 2px; font-size: 17px; line-height: 24px; color: #34373d; white-space: nowrap; }
    .glyph { height: 26px; display: flex; align-items: center; color: #666970; }
    .tool:disabled, .tool:disabled .glyph { color: #bdbfc3; }
    .split { display: flex; align-items: center; gap: 8px; }
    .actions { display: flex; align-items: center; justify-content: flex-end; padding-right: 19px; }
    .primary { height: 51px; width: 186px; margin: 0 19px 0 24px; border-radius: 4px; background: #1b7cf9; color: #fff; font-size: 22px; white-space: nowrap; }
    .close { display: grid; place-items: center; width: 45px; height: 45px; border-radius: 4px; background: #edeef2; }
    .share { margin-left: 28px; }

    .body { flex: 1; display: flex; min-height: 0; }
    .side { position: relative; z-index: 1; flex: none; width: 410px; display: flex; flex-direction: column; background: #fff; border-radius: 0 12px 16px 0; box-shadow: 0 0 24px rgba(30, 40, 60, 0.09); }
    .title { margin: 0; padding: 13px 20px 0; font-size: 22px; line-height: 32px; font-weight: 700; color: #34373d; }
    .filter { display: flex; align-items: center; justify-content: space-between; padding: 28px 24px 17px 13px; }
    .pick { position: relative; display: block; width: 327px; }
    .pick select { appearance: none; display: block; width: 100%; height: 45px; padding: 0 13px; border: 1px solid #dcdde1; border-radius: 4px; background: #fff; font-size: 19px; color: #34373d; }
    .pick svg { position: absolute; right: 20px; top: 19px; }
    .tree { flex: 1; min-height: 0; margin: 0; padding: 0 26px 6px 0; list-style: none; display: grid; grid-template-columns: minmax(0, 1fr); grid-auto-rows: minmax(40px, 1fr); }
    .row { display: flex; align-items: center; width: 100%; height: 100%; border-radius: 4px; text-align: left; color: #44484f; }
    .row .arrow { width: 8px; margin-right: 24px; }
    .row .mark { width: 22px; margin-right: 11px; display: grid; place-items: center; color: #666970; }
    .row .name { flex: 1; min-width: 0; white-space: nowrap; }
    .level1 { padding-left: 46px; }
    .level2 { padding-left: 72px; }
    .level3 { padding-left: 115px; }
    .level3 .row { padding-left: 15px; }
    .level3 .arrow { display: none; }
    .row.current { background: #1b7cf9; color: #fff; font-weight: 500; }
    .row.current .mark { color: #fff; }
    .thumb { position: absolute; right: 6px; top: 202px; width: 7px; height: 471px; border-radius: 4px; background: #eaebeb; }
    .chat { position: absolute; left: 0; bottom: 7px; width: 58px; height: 57px; border-radius: 4px 18px 20px 0; background: #3f69ff; }

    .stage { position: relative; flex: 1; min-width: 0; }
    floor-plan { position: absolute; inset: 0; }
    .back { position: absolute; left: 46px; top: 61px; display: flex; align-items: center; gap: 11px; height: 51px; padding: 0 25px 0 28px; border-radius: 4px; background: #929398; color: #fff; font-size: 22px; white-space: nowrap; }
    .preview { position: absolute; top: 0; right: 0; width: 384px; border-radius: 12px; overflow: hidden; background: #f7f8fa; box-shadow: 0 6px 28px rgba(30, 40, 60, 0.14); }
    .tabs { display: grid; grid-template-columns: 32px 1fr 1fr 44px; height: 45px; }
    .tab { color: #666970; font-weight: 500; }
    .tab.on { background: #fff; color: #1b7cf9; font-weight: 700; }
    .grip { display: grid; place-items: center; padding-left: 6px; background: #f7f7f8; }
    .dock { display: grid; place-items: center; background: #f7f7f8; }
    .handle { position: absolute; right: 0; top: 782px; width: 31px; height: 38px; display: grid; place-items: center; background: #f9fafc; border-radius: 4px 0 0 4px; }
    .bar { display: flex; align-items: center; height: 57px; border-radius: 7px; background: #f8f9fb; box-shadow: 0 3px 14px rgba(30, 40, 60, 0.09); color: #74777f; }
    .bar button { display: grid; place-items: center; }
    .left { position: absolute; left: 25px; bottom: 26px; width: 218px; padding: 0 25px; gap: 32px; }
    .right { position: absolute; right: 26px; bottom: 26px; display: flex; gap: 13px; }
    .single { width: 83px; justify-content: center; }
    .zoombar { padding: 0 23px 0 19px; }
    .view { display: flex; align-items: center; gap: 24px; padding-right: 12px; border-right: 2px solid #dcdde1; height: 36px; }
    .view button { width: 44px; }
    .amount { display: flex; align-items: center; width: 128px; height: 45px; margin: 0 10px 0 11px; padding: 0 21px 0 19px; border: 1px solid #d8dade; border-radius: 4px; color: #a4a7ad; }
    .amount input { flex: 1; min-width: 0; width: 40px; height: 43px; padding-top: 12px; color: #3b3f47; outline: 0; }
    .minus { margin-left: 15px; }
    .pointer { position: absolute; left: 508px; top: 93px; z-index: 2; pointer-events: none; }
  `];

  private tool(icon: string, label: string, disabled = false) {
    return html`<button class="tool" ?disabled=${disabled}><span class="glyph">${icons[icon]}</span>${label}</button>`;
  }

  private row(item: TreeRow, index: number) {
    const on = index === this.current;
    return html`<li class="level${item.level}">
      <button class=${classMap({ row: true, current: on })} aria-current=${on ? "true" : "false"} @click=${() => { this.current = index; }}>
        <span class="arrow">${item.open ? html`<svg width="8" height="7" viewBox="0 0 8 7"><path fill="#666970" d="M0 0H8L4 7Z"/></svg>` : ""}</span>
        <span class="mark">${icons[item.icon]}</span><span class="name">${item.label}</span>
      </button></li>`;
  }

  render() {
    return html`
      <div class="app">
        <header class="header">
          <nav class="modes">
            <button class="mode active">
              <svg width="33" height="31" viewBox="0 0 33 31" fill="#1b7cf9"><path d="M0 0H9V7H13V0H22V14H9V10H7V14H0ZM0 17H13V20H16V17H22V31H14V22Q4 22 1 31H0ZM4 31Q5 26 11 25V31Z"/><rect x="25" width="8" height="4"/><path d="M25 6H33V25L30 31H28L25 25Z"/></svg>
              ビューの編集
            </button>
            <button class="mode marked">
              <svg width="34" height="31" viewBox="0 0 34 31"><path fill="#96989e" d="M1 0H34V19H23V31H1Q0 31 0 30V1Q0 0 1 0Z"/><path fill="none" stroke="#f9fafc" stroke-width="2" d="M4 4H22V18H4Z"/><path fill="#96989e" d="M8 8H18V14H8Z"/><path stroke="#96989e" stroke-width="2" d="M26 22.500H34M26 26H34M26 30H34"/></svg>
              図面レイアウト
            </button>
          </nav>
          <div class="tools">
            <div class="group">${this.tool("save", "保存")}</div>
            <div class="group">${this.tool("undo", "取り消す")}${this.tool("redo", "やり直す", true)}</div>
            <div class="group wide">
              <div class="split">${this.tool("select", "選択")}${caret}</div>
              ${this.tool("measure", "寸法")}${this.tool("text", "テキスト")}${this.tool("symbol", "シンボル")}${this.tool("pencil", "編集")}
              <div class="split">${this.tool("check", "チェック")}${caret}</div>
            </div>
            <div class="group last">${this.tool("goLayout", "レイアウトに行く")}</div>
          </div>
          <div class="actions">
            <div class="split">${this.tool("gear", "設定")}${caret}</div>
            <div class="share">${this.tool("share", "共有")}</div>
            <button class="primary">ダウンロード</button>
            <button class="close" aria-label="閉じる"><svg width="22" height="22" viewBox="0 0 22 22"><path d="M1 1L21 21M21 1L1 21" stroke="#85888e" stroke-width="2.500"/></svg></button>
          </div>
        </header>
        <div class="body">
          <aside class="side">
            <h2 class="title">ビュー一覧</h2>
            <div class="filter">
              <label class="pick">
                <select aria-label="ビューの種類"><option>全て</option></select>
                <svg width="8" height="7" viewBox="0 0 8 7"><path fill="#b0b2b6" d="M0 0H8L4 7Z"/></svg>
              </label>
              <button aria-label="折りたたむ"><svg width="22" height="22" viewBox="0 0 22 22"><path d="M0 1.500H22M9 11H22M0 20.500H22" stroke="#96989e" stroke-width="2.500"/><path fill="#96989e" d="M0 7L5 11L0 15Z"/></svg></button>
            </div>
            <ul class="tree">${rows.map((r, i) => this.row(r, i))}</ul>
            <div class="thumb"></div>
            <button class="chat" aria-label="チャット">
              <svg width="58" height="57" viewBox="0 0 58 57"><path fill="#fff" stroke="#0c1e52" stroke-width="1.500" d="M27.500 11C39 11 46 17 46 25.500S40 38 29 39Q26 44 20 45Q22 42 22 38.500Q9 36 9.500 25.500Q10 11 27.500 11Z"/><path fill="#0c1e52" d="M22 39Q22 43 19 46Q27 45 30 39Z"/><path fill="#fff" d="M24 36V42L29 38Z"/><ellipse cx="27" cy="23.500" rx="2" ry="4" fill="#0c1e52"/><ellipse cx="36" cy="23.500" rx="2" ry="4" fill="#0c1e52"/></svg>
            </button>
          </aside>
          <main class="stage">
            <floor-plan></floor-plan>
            <button class="back"><svg width="12" height="20" viewBox="0 0 12 20"><path d="M10.500 1L2 10L10.500 19" fill="none" stroke="#fff" stroke-width="2.500"/></svg>拡大範囲設定に戻る</button>
            <section class="preview">
              <div class="tabs">
                <span class="grip"><svg width="8" height="20" viewBox="0 0 8 20" fill="#5d6067"><circle cx="1.500" cy="1.500" r="1.400"/><circle cx="6.500" cy="1.500" r="1.400"/><circle cx="1.500" cy="7" r="1.400"/><circle cx="6.500" cy="7" r="1.400"/><circle cx="1.500" cy="12.500" r="1.400"/><circle cx="6.500" cy="12.500" r="1.400"/><circle cx="1.500" cy="18" r="1.400"/><circle cx="6.500" cy="18" r="1.400"/></svg></span>
                <button class="tab on">3Dビュー</button><button class="tab">部屋選択</button>
                <button class="dock" aria-label="切り離す"><svg width="20" height="20" viewBox="0 0 20 20"><rect x="1" y="1" width="18" height="18" rx="2" fill="none" stroke="#8a8d93" stroke-width="2"/><rect x="9" y="4" width="7" height="7" fill="#8a8d93"/></svg></button>
              </div>
              <room-preview></room-preview>
            </section>
            <button class="handle" aria-label="パネルを開く"><svg width="12" height="20" viewBox="0 0 12 20"><path d="M10.500 1L2 10L10.500 19" fill="none" stroke="#85888e" stroke-width="3"/></svg></button>
            <div class="bar left">
              <button aria-label="カラー図面"><svg width="34" height="30" viewBox="0 0 34 30"><path fill="#5a5c5b" fill-rule="evenodd" d="M1 0H26L34 8V28Q34 29 33 29H1Q0 29 0 28V1Q0 0 1 0ZM5 4V25H30V10H24V4Z"/><path fill="#ff431d" d="M7 12H14V17H7Z"/><path fill="#ffb01a" d="M14 12H21V17H14Z"/><path fill="#3385ff" d="M21 12H27V17H21Z"/></svg></button>
              <button aria-label="白黒反転"><svg width="32" height="28" viewBox="0 0 32 28"><rect x="1.500" y="1.500" width="29" height="25" rx="1" fill="none" stroke="currentColor" stroke-width="3"/><path fill="currentColor" d="M30 2V26H3Z"/></svg></button>
              <button aria-label="非表示"><svg width="32" height="18" viewBox="0 0 32 18"><path fill="currentColor" d="M2.500 4L6 0L9 1Q10 5 16 5.500T23 1L26 0L30 4L29 6L27 7Q29 9 30 10L27 14L22 11L19 12V17H13V12L10 11L5 14L2 10L5 7Z"/></svg></button>
            </div>
            <div class="right">
              <div class="bar single"><button aria-label="ロック"><svg width="26" height="32" viewBox="0 0 26 32"><path d="M4.500 15V9.500A8.500 8 0 0 1 21.500 9.500V15" fill="none" stroke="currentColor" stroke-width="3"/><path fill="currentColor" fill-rule="evenodd" d="M2 14.500H24Q26 14.500 26 16.500V30Q26 32 24 32H2Q0 32 0 30V16.500Q0 14.500 2 14.500ZM13 19Q11.500 19 11.500 20.500V26Q11.500 27.500 13 27.500T14.500 26V20.500Q14.500 19 13 19Z"/></svg></button></div>
              <div class="bar single"><button aria-label="直交"><svg width="31" height="31" viewBox="0 0 31 31"><path d="M2 0V29H31M2 18H14.500V29" fill="none" stroke="currentColor" stroke-width="3.500"/></svg></button></div>
              <div class="bar zoombar">
                <div class="view">
                  <button aria-label="画像"><svg width="30" height="24" viewBox="0 0 30 24"><path fill="currentColor" fill-rule="evenodd" d="M1 0H29Q30 0 30 1V22Q30 23 29 23H1Q0 23 0 22V1Q0 0 1 0ZM6 18H23L16 9L12 14L10.500 12.500ZM8.500 5A2.500 2.500 0 1 0 8.500 10A2.500 2.500 0 1 0 8.500 5Z"/></svg></button>
                  <button aria-label="全体表示"><svg width="30" height="30" viewBox="0 0 30 30"><path d="M1.500 10V2H10M20 2H28.500V10M28.500 20V28H20M10 28H1.500V20" fill="none" stroke="currentColor" stroke-width="3"/><circle cx="15" cy="15" r="5" fill="currentColor"/></svg></button>
                  <button aria-label="範囲拡大"><svg width="36" height="36" viewBox="0 0 36 36" fill="none" stroke="currentColor"><path stroke-width="3.500" d="M15 26.500H2V2H29V14"/><circle cx="23.500" cy="23" r="8.500" stroke-width="3"/><path stroke-width="4" d="M29.500 29.500L35 35"/><path stroke-width="2" d="M19.500 23H27.500M23.500 19V27"/></svg></button>
                </div>
                <button class="minus" aria-label="縮小" @click=${() => { this.zoom -= 1; }}><svg width="24" height="24" viewBox="0 0 24 24"><path d="M2 12H22" stroke="currentColor" stroke-width="4.500" stroke-linecap="round"/></svg></button>
                <label class="amount"><input aria-label="ズーム" .value=${String(this.zoom)} />%</label>
                <button aria-label="拡大" @click=${() => { this.zoom += 1; }}><svg width="24" height="24" viewBox="0 0 24 24"><path d="M2 12H22M12 2V22" stroke="currentColor" stroke-width="4.500" stroke-linecap="round"/></svg></button>
              </div>
            </div>
          </main>
        </div>
        <svg class="pointer" width="172" height="193" viewBox="0 0 172 193"><path fill="#fc5352" d="M0 0L51 25Q51 27 40 33L171 192L169 193L28 43L21 52Z"/></svg>
      </div>`;
  }
}
